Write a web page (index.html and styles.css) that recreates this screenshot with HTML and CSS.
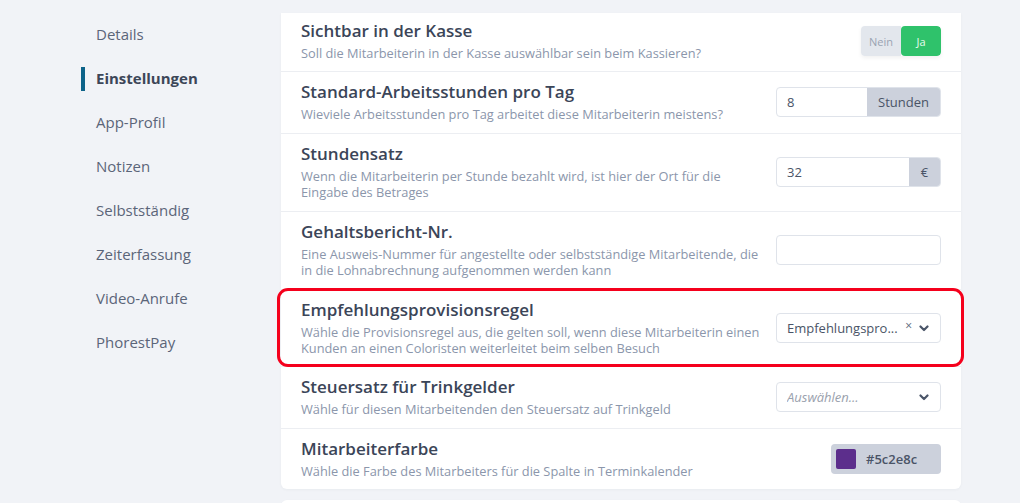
FILE: index.html
```html
<!DOCTYPE html>
<html lang="de">
<head>
<meta charset="utf-8">
<link rel="stylesheet" href="styles.css">
</head>
<body>
<div class="page">
  <nav class="sidebar">
    <a class="nav-item">Details</a>
    <a class="nav-item active">Einstellungen</a>
    <a class="nav-item">App-Profil</a>
    <a class="nav-item">Notizen</a>
    <a class="nav-item">Selbstständig</a>
    <a class="nav-item">Zeiterfassung</a>
    <a class="nav-item">Video-Anrufe</a>
    <a class="nav-item">PhorestPay</a>
  </nav>
  <main class="main">
    <section class="card">
      <div class="row first">
        <div class="text">
          <div class="title">Sichtbar in der Kasse</div>
          <div class="desc">Soll die Mitarbeiterin in der Kasse auswählbar sein beim Kassieren?</div>
        </div>
        <div class="control">
          <div class="toggle"><span class="opt off">Nein</span><span class="opt on">Ja</span></div>
        </div>
      </div>
      <div class="row">
        <div class="text">
          <div class="title">Standard-Arbeitsstunden pro Tag</div>
          <div class="desc">Wieviele Arbeitsstunden pro Tag arbeitet diese Mitarbeiterin meistens?</div>
        </div>
        <div class="control">
          <div class="input-group"><span class="input-val">8</span><span class="addon wide">Stunden</span></div>
        </div>
      </div>
      <div class="row">
        <div class="text">
          <div class="title">Stundensatz</div>
          <div class="desc">Wenn die Mitarbeiterin per Stunde bezahlt wird, ist hier der Ort für die Eingabe des Betrages</div>
        </div>
        <div class="control">
          <div class="input-group"><span class="input-val">32</span><span class="addon">€</span></div>
        </div>
      </div>
      <div class="row">
        <div class="text">
          <div class="title">Gehaltsbericht-Nr.</div>
          <div class="desc">Eine Ausweis-Nummer für angestellte oder selbstständige Mitarbeitende, die in die Lohnabrechnung aufgenommen werden kann</div>
        </div>
        <div class="control">
          <div class="input-group"><span class="input-val"></span></div>
        </div>
      </div>
      <div class="row highlight">
        <div class="text">
          <div class="title">Empfehlungsprovisionsregel</div>
          <div class="desc">Wähle die Provisionsregel aus, die gelten soll, wenn diese Mitarbeiterin einen Kunden an einen Coloristen weiterleitet beim selben Besuch</div>
        </div>
        <div class="control">
          <div class="select">
            <span class="select-val">Empfehlungspro...</span>
            <span class="clear">×</span>
            <svg class="chev" width="10" height="7" viewBox="0 0 10 7"><path d="M1.5 1.5 L5 5 L8.5 1.5" fill="none" stroke="#4a5568" stroke-width="2.2" stroke-linecap="round" stroke-linejoin="round"/></svg>
          </div>
        </div>
      </div>
      <div class="row">
        <div class="text">
          <div class="title">Steuersatz für Trinkgelder</div>
          <div class="desc">Wähle für diesen Mitarbeitenden den Steuersatz auf Trinkgeld</div>
        </div>
        <div class="control">
          <div class="select">
            <span class="select-val placeholder">Auswählen...</span>
            <svg class="chev" width="10" height="7" viewBox="0 0 10 7"><path d="M1.5 1.5 L5 5 L8.5 1.5" fill="none" stroke="#4a5568" stroke-width="2.2" stroke-linecap="round" stroke-linejoin="round"/></svg>
          </div>
        </div>
      </div>
      <div class="row last">
        <div class="text">
          <div class="title">Mitarbeiterfarbe</div>
          <div class="desc">Wähle die Farbe des Mitarbeiters für die Spalte in Terminkalender</div>
        </div>
        <div class="control">
          <div class="color-pick"><span class="swatch"></span><span class="hex">#5c2e8c</span></div>
        </div>
      </div>
    </section>
    <section class="card next"></section>
  </main>
</div>
</body>
</html>
```
FILE: styles.css
```css
* { box-sizing: border-box; }
html, body {
  margin: 0;
  padding: 0;
  background: #f1f3f7;
  font-family: "Open Sans", "Liberation Sans", sans-serif;
  height: 503px;
  overflow: hidden;
}
.page {
  display: flex;
  align-items: flex-start;
}
.sidebar {
  width: 281px;
  padding: 23px 0 0 81px;
  display: flex;
  flex-direction: column;
}
.nav-item {
  display: block;
  position: relative;
  height: 44px;
  line-height: 22px;
  padding-left: 15px;
  font-size: 15px;
  color: #5b6579;
}
.nav-item.active {
  font-weight: 700;
  color: #3c4658;
}
.nav-item.active::before {
  content: "";
  position: absolute;
  left: 0;
  top: 0;
  width: 4px;
  height: 24px;
  background: #0d6389;
}
.main {
  width: 680px;
  padding-top: 13px;
}
.card {
  background: #fff;
  border-radius: 0 0 6px 6px;
  box-shadow: 0 1px 3px rgba(30, 40, 60, 0.04);
}
.card.next {
  margin-top: 11px;
  height: 40px;
  border-radius: 6px 6px 0 0;
}
.row {
  display: flex;
  align-items: center;
  gap: 10px;
  padding: 10px 20px 11px 20px;
  border-bottom: 1px solid #eceef2;
  position: relative;
}
.row.first { padding-top: 8px; padding-bottom: 10px; }
.row.last { border-bottom: none; padding-bottom: 10px; }
.row.highlight { padding-bottom: 10px; }
.row.highlight::after {
  content: "";
  position: absolute;
  left: -4px;
  right: -3px;
  top: -2px;
  bottom: -1px;
  border: 3px solid #f5001c;
  border-radius: 11px;
  pointer-events: none;
}
.text {
  width: 465px;
  flex: none;
}
.title {
  font-size: 17px;
  font-weight: 600;
  line-height: 20px;
  color: #3b4558;
  margin-bottom: 4px;
}
.desc {
  font-size: 12.8px;
  line-height: 16px;
  color: #8b96ab;
}
.control {
  flex: 1;
  display: flex;
  justify-content: flex-end;
}
.toggle {
  display: flex;
  height: 30px;
  border-radius: 4px;
  overflow: hidden;
  box-shadow: 0 2px 4px rgba(0, 0, 0, 0.06);
}
.opt {
  width: 40px;
  display: flex;
  align-items: center;
  justify-content: center;
  font-size: 11px;
}
.opt.off { background: #e3e7ed; color: #9aa3b2; }
.opt.on { background: #2fc26b; color: #e9fbef; border-radius: 4px; }
.input-group {
  width: 165px;
  height: 30px;
  display: flex;
  border: 1px solid #dfe3ea;
  border-radius: 4px;
  overflow: hidden;
  background: #fff;
}
.input-val {
  flex: 1;
  padding-left: 10px;
  display: flex;
  align-items: center;
  font-size: 13px;
  color: #4a5467;
}
.addon {
  width: 31px;
  background: #ccd1dc;
  display: flex;
  align-items: center;
  justify-content: center;
  font-size: 13px;
  color: #4a5467;
}
.addon.wide { width: 73px; }
.select {
  width: 165px;
  height: 30px;
  display: flex;
  align-items: center;
  border: 1px solid #dfe3ea;
  border-radius: 4px;
  padding: 0 11px 0 10px;
  background: #fff;
}
.select-val {
  flex: 1;
  font-size: 13px;
  color: #4a5467;
  white-space: nowrap;
  overflow: hidden;
}
.select-val.placeholder {
  font-style: italic;
  color: #9aa1ad;
}
.clear {
  font-size: 12px;
  color: #5b6579;
  margin-right: 7px;
  line-height: 1;
  margin-top: -4px;
}
.chev { flex: none; }
.color-pick {
  width: 110px;
  height: 30px;
  display: flex;
  align-items: center;
  gap: 10px;
  background: #ccd1dc;
  border-radius: 4px;
  padding-left: 5px;
}
.swatch {
  width: 20px;
  height: 20px;
  background: #5c2e8c;
  border-radius: 2px;
}
.hex {
  font-size: 13px;
  font-weight: 600;
  color: #4a5467;
}
```
